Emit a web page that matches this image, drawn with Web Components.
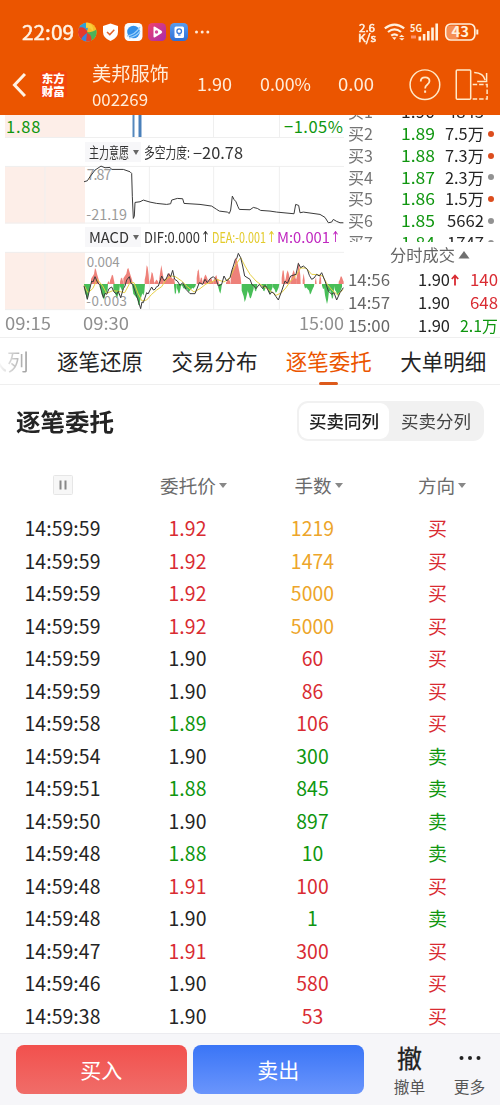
<!DOCTYPE html>
<html lang="zh-CN">
<head>
<meta charset="utf-8">
<meta name="viewport" content="width=device-width">
<title>美邦服饰 002269</title>
<style>
body {
    margin: 0;
    width: 500px;
    height: 1105px;
    overflow: hidden;
    background: #fff;
    color: #242424;
    font-family: "Noto Sans CJK SC", "Noto Sans", sans-serif;
    --red: #d92b32;
    --green: #0f960f;
    --amber: #eda52a;
    --orange: #eb5500;
}
</style>
</head>
<body>
<quote-app></quote-app>

<script>
class ZBase extends HTMLElement {
    constructor() {
        super()
        const shadowRoot = this.attachShadow({ mode: 'open' })
        const template = document.createElement('template')
        template.innerHTML = `${this.style_}${this.html}`
        shadowRoot.appendChild(template.content.cloneNode(true))
    }
    get html() { return '<slot></slot>' }
    get style_() { return '' }
}

// one line of text, squeezed or stretched to the width in w
class FitText extends ZBase {
    get html() { return `<span><slot></slot></span>` }
    get style_() { return `
<style>
:host { display: block; flex: none; white-space: nowrap; line-height: 1.2; }
span { display: inline-block; transform-origin: 0 50%; }
</style>
    `}
    connectedCallback() {
        const w = Number(this.getAttribute('w'))
        const span = this.shadowRoot.querySelector('span')
        this.style.width = w + 'px'
        const real = span.getBoundingClientRect().width
        if (real > 0) span.style.transform = `scaleX(${w / real})`
    }
}

class StatusBar extends ZBase {
    get html() { return `
<fit-text class="time" w="52">22:09</fit-text>
<svg class="apps" width="134" height="22" viewBox="76 21 134 22">
  <defs>
    <linearGradient id="pk" x1="0" y1="0" x2="1" y2="1"><stop offset="0" stop-color="#f0436a"/><stop offset="1" stop-color="#a62bb0"/></linearGradient>
    <linearGradient id="bl" x1="0" y1="0" x2="0" y2="1"><stop offset="0" stop-color="#5a9df0"/><stop offset="1" stop-color="#2c6fd6"/></linearGradient>
    <clipPath id="ball"><circle cx="87.300" cy="32" r="9.400"/></clipPath>
  </defs>
  <g clip-path="url(#ball)">
    <rect x="77" y="22" width="21" height="21" fill="#f8bd2a"/>
    <path d="M77 28Q82 22 86 22Q90 27 86 33Q81 28 77 29Z" fill="#2f9fd8"/>
    <path d="M77 28Q85 25 88 33L84 43H77Z" fill="#e43a2d"/>
    <path d="M86 22Q94 24 93 31Q90 27 86 28Z" fill="#f9cf3c"/>
    <path d="M98 26Q96 33 87 32Q91 39 89 43H98Z" fill="#4db25a"/>
    <path d="M80 42Q82 36 87 33Q92 38 90 43Z" fill="#3a86dd"/>
    <path d="M87 33Q93 35 91 43L86 42Z" fill="#e6402e"/>
  </g>
  <path d="M110.500 23.500L118 26V32Q118 38 110.500 41Q103 38 103 32V26Z" fill="#fff"/>
  <path d="M107 32L109.800 34.600L114.300 29.800" fill="none" stroke="#e2622c" stroke-width="1.500"/>
  <rect x="124.500" y="23" width="18" height="18" rx="4.500" fill="#f8fcff"/>
  <circle cx="133.500" cy="32" r="6.300" fill="#3190ea"/>
  <path d="M127 36Q135 35 140 27M129 38Q137 36 140 31" fill="none" stroke="#9bd1fb" stroke-width="1.400"/>
  <rect x="148" y="23" width="18" height="18" rx="4.500" fill="url(#pk)"/>
  <path d="M153.500 27.500Q153.500 26 155 26.800L161.500 30.800Q163 32 161.500 33.200L155 37.200Q153.500 38 153.500 36.500Z" fill="#fff"/>
  <circle cx="156.500" cy="32" r="1.700" fill="#d5469c"/>
  <rect x="170" y="23" width="18" height="18" rx="4.500" fill="url(#bl)"/>
  <rect x="174.500" y="26.500" width="9.500" height="11.500" rx="1.500" fill="#fff"/>
  <circle cx="179.200" cy="31.200" r="2.300" fill="none" stroke="#3479de" stroke-width="1.300"/>
  <path d="M178 35h2.500" stroke="#3479de" stroke-width="1.200"/>
  <g fill="#ffe9d6"><circle cx="196.500" cy="32" r="1.500"/><circle cx="202.200" cy="32" r="1.500"/><circle cx="207.800" cy="32" r="1.500"/></g>
</svg>
<div class="speed"><fit-text w="16">2.6</fit-text><fit-text w="18">K/s</fit-text></div>
<svg class="signal" width="100" height="22" viewBox="382 21 100 22">
  <g fill="none" stroke="#fff0dc" stroke-width="2.200">
    <path d="M384.800 28.400Q394.500 20.700 404.200 28.400"/>
    <path d="M388 32Q394.500 26.800 401 32"/>
    <path d="M391.200 35.600Q394.500 33 397.800 35.600"/>
  </g>
  <path d="M392 37.300L394.500 40L396.500 37.300Z" fill="#fff0dc"/>
  <path d="M399 37L401.500 34.700L404.500 37ZM399 38.300L402 40.500L404.500 38.300Z" fill="#fff0dc"/>
  <text x="410" y="31.500" font-size="10" font-weight="700" fill="#fff0dc" textLength="12" lengthAdjust="spacingAndGlyphs">5G</text>
  <g fill="#fff0dc"><rect x="418.500" y="36.500" width="2.600" height="4"/><rect x="422.800" y="34" width="2.600" height="6.500"/><rect x="427" y="31" width="2.600" height="9.500"/><rect x="431.200" y="27.500" width="2.600" height="13"/><rect x="435.400" y="23.500" width="2.600" height="17"/></g>
  <path d="M411 37h5" stroke="#ff9169" stroke-width="3"/>
  <rect x="447" y="25.500" width="12" height="13.500" rx="3" fill="#f58f55"/>
  <rect x="445.800" y="24" width="29" height="16" rx="5" fill="none" stroke="#fff0dc" stroke-width="1.700"/>
  <path d="M477.300 29.500v5" stroke="#fff0dc" stroke-width="2"/>
  <text x="451.500" y="37.300" font-size="14.500" font-weight="700" fill="#fff0dc" textLength="17.500" lengthAdjust="spacingAndGlyphs">43</text>
</svg>
    `}
    get style_() { return `
<style>
:host { display: flex; align-items: center; height: 64px; box-sizing: border-box; padding: 0 18px 0 22px; color: #fff3e4; }
svg { overflow: visible; }
.time { font-size: 19.5px; line-height: 22px; -webkit-text-stroke: .5px #fff3e4; }
.apps { margin-left: 2px; }
.speed { margin-left: auto; font-size: 11px; display: flex; flex-direction: column; align-items: center; -webkit-text-stroke: .5px #fff3e4; }
.speed fit-text { line-height: 10px; }
.signal { margin-left: 6px; }
</style>
    `}
}

class StockHeader extends ZBase {
    get html() { return `
<svg width="15" height="26" viewBox="0 0 15 26"><path d="M13 2L2.500 13L13 24" fill="none" stroke="#fff3e4" stroke-width="3"/></svg>
<div class="logo"><span>东方</span><span>财富</span></div>
<div class="name"><fit-text class="cn" w="77">美邦服饰</fit-text><fit-text class="code" w="56">002269</fit-text></div>
<fit-text class="num" w="35" style="margin-left:27px">1.90</fit-text>
<fit-text class="num" w="51" style="margin-left:27.500px">0.00%</fit-text>
<fit-text class="num" w="36" style="margin-left:27.500px">0.00</fit-text>
<svg style="margin-left:34px" width="82" height="34" viewBox="408 68 82 34" fill="none" stroke="#ffe9c8" stroke-width="1.500">
  <circle cx="425" cy="84.700" r="14.900"/>
  <path d="M420.800 81.500Q420.800 77.300 425.200 77.300Q429.600 77.300 429.600 81Q429.600 83.200 427.300 84.700Q425.200 86.200 425.200 88.500" stroke-width="1.800"/>
  <path d="M425.200 90.500v2.300" stroke-width="2"/>
  <rect x="456.500" y="70" width="14.500" height="29.200" rx="1"/>
  <path d="M473 84.500H487.500V99H472" stroke-dasharray="4.500 2"/>
  <path d="M474.500 72.500Q484 73 485.500 80M487 73V81.500H477.500"/>
</svg>
    `}
    get style_() { return `
<style>
:host { display: flex; align-items: center; height: 51px; padding: 0 10px 5px 12px; color: #ffedda; margin-top: -5px; }
.logo { display: flex; flex-direction: column; margin-left: 13px; width: 27px; height: 27px; justify-content: center; align-items: center; background: #f2450d; border-radius: 4px; font-weight: 900; font-size: 11.5px; line-height: 12.5px; color: #fff; }
.name { margin-left: 25px; width: 79px; padding-top: 2px; }
.cn { font-size: 19px; line-height: 27px; }
.code { font-size: 16px; line-height: 26px; }
.num { font-size: 17.5px; line-height: 26px; margin-top: -1px; }
</style>
    `}
}

class ChartPane extends ZBase {
    get html() {
        // bars: [from, to, peak], base line at 174
        const bars = [
            [273,298,125],[322,330,164],[330,344,143],[360,370,152],[370,398,124],[434,448,112],[449,463,134],[463,476,160],[478,490,117],[490,525,140],
            [590,600,122],[600,608,150],[608,625,144],[625,640,154],[640,657,146],[678,692,158],[692,724,92],[845,854,122],[854,872,133],[872,890,132],[889,902,104],[908,914,142],[945,950,150],[957,964,142],[1016,1031,148],
            [252,271,222],[299,324,222],[340,360,220],[360,374,196],[397,435,240],
            [522,530,212],[530,544,206],[544,588,198],[655,666,205],[725,744,230],[740,762,220],[762,772,200],[784,800,198],[800,818,204],[818,838,202],[912,920,190],[918,943,206],[966,975,192],[972,990,234],[990,1004,224],[1002,1026,210]
        ]
        let svg = ''
        for (const [a, b, y] of bars) {
            let d = `M${a} 174`
            const mid = (a + b) / 2
            for (let x = a; x <= b; x += 3) {
                const k = 1 - Math.abs(x - mid) / (b - a) * 1.3
                const jag = ((x * 7) % 5) / 5 * .25
                d += `L${x} ${174 + (y - 174) * Math.max(0, k - (Math.abs(x - mid) > 3 ? jag : 0))}`
            }
            svg += `<path d="${d}L${b} 174Z" fill="${y < 174 ? '#ed746c' : '#35b847'}"/>`
        }
        return `
<svg width="345" height="23" viewBox="0 0 345 23">
  <rect x="5" y="0" width="80" height="22" fill="#fdeee8"/>
  <path d="M5 22.500H344M213.500 0V22M279.500 0V22" class="grid"/>
  <path d="M133.500 0v22" stroke="#5588bd" stroke-width="2"/>
  <path d="M140 0v22" stroke="#4a80ba" stroke-width="3"/>
  <text x="6" y="17.500" font-size="16.500" fill="#0f960f" textLength="34.500">1.88</text>
  <text x="284" y="17.500" font-size="16.500" fill="#0f960f" textLength="59">−1.05%</text>
</svg>
<div class="bar"><fit-text class="pick" w="40">主力意愿</fit-text><i></i><fit-text w="46">多空力度:</fit-text><fit-text class="wide" w="50" style="margin-left:3px">−20.78</fit-text></div>
<svg width="345" height="57.500" viewBox="0 168 1035 172">
  <rect x="15" y="168" width="240" height="172" fill="#fdeee8"/>
  <path d="M15 169H1032M15 339H1032M448 168V340M641 168V340M838 168V340M135 168V340" class="grid"/>
  <text x="260" y="210" class="axis" textLength="74">7.87</text>
  <text x="259" y="329" class="axis" textLength="122">-21.19</text>
  <polyline class="ln" points="252,215 262,212 270,200 285,180 303,168 315,173 330,172 335,178 370,178 390,185 395,190 397,260 400,325 403,318 405,277 420,275 430,270 450,276 470,280 500,283 512,281 515,270 532,265 548,266 552,280 600,283 635,288 650,298 658,303 682,306 688,310 692,300 697,258 702,268 708,275 714,290 718,298 750,299 760,292 772,295 782,301 810,303 830,306 882,311 887,283 896,286 900,308 910,306 960,313 975,322 985,338 995,336 1000,328 1010,334 1020,338 1030,338"/>
</svg>
<div class="bar b2"><fit-text class="pick" w="40">MACD</fit-text><i></i><fit-text w="56">DIF:0.000</fit-text><fit-text class="up" w="9">↑</fit-text><fit-text w="54" style="color:#e3cb2c">DEA:-0.001</fit-text><fit-text class="up" w="9" style="color:#e3cb2c">↑</fit-text><fit-text w="53" style="color:#c028c0">M:0.001</fit-text><fit-text class="up" w="9" style="color:#c028c0">↑</fit-text></div>
<svg width="345" height="58" viewBox="0 78 1035 174">
  <rect x="15" y="78" width="240" height="174" fill="#fdeee8"/>
  <path d="M15 79H1032M15 251H1032M448 78V252M641 78V252M838 78V252M135 78V252" class="grid"/>
  <g opacity=".9">${svg}</g>
  <text x="260" y="123" class="axis sm" textLength="99">0.004</text>
  <text x="259" y="241" class="axis sm" textLength="122">-0.003</text>
  <polyline class="ln dea" points="252,178 264,200 278,188 292,160 308,180 320,202 338,194 356,196 374,200 390,170 402,170 414,202 426,225 440,222 455,205 470,192 485,182 500,158 515,150 526,152 545,165 562,182 582,198 600,188 618,174 635,168 650,160 672,168 690,155 708,115 722,95 735,120 750,145 768,165 785,178 805,190 828,208 845,200 858,185 872,165 888,148 902,126 918,126 935,145 952,146 968,150 982,175 996,192 1012,206 1030,190"/>
  <polyline class="ln" points="252,180 257,198 262,220 267,198 275,165 279,168 285,152 292,168 300,178 305,198 310,215 315,202 320,205 327,188 335,183 342,198 350,205 355,196 362,215 370,188 375,180 380,162 388,152 393,172 398,175 408,205 415,225 422,248 426,228 430,230 440,200 444,204 455,183 460,192 465,190 470,182 475,180 485,150 492,164 498,160 505,143 512,152 518,133 524,160 532,165 540,178 548,170 558,190 570,203 585,203 598,170 608,175 615,160 622,170 630,158 640,152 648,160 655,180 665,175 672,150 680,165 690,155 696,132 700,120 706,100 710,98 715,82 722,95 728,120 734,150 750,160 756,176 760,178 768,188 778,175 788,188 792,180 798,180 810,205 815,198 820,200 828,212 835,222 845,195 850,180 855,165 862,172 872,150 888,145 895,112 902,125 910,120 922,130 928,148 935,160 942,156 950,145 958,150 965,140 975,165 985,195 995,205 1002,200 1010,222 1020,200 1030,185"/>
</svg>
<div class="times"><fit-text w="46">09:15</fit-text><fit-text w="46" style="margin-left:32px">09:30</fit-text><fit-text w="45" style="margin-left:auto">15:00</fit-text></div>
    `}
    get style_() { return `
<style>
:host { display: flex; flex-direction: column; width: 345px; height: 222px; }
svg { display: block; flex: none; overflow: visible; }
.grid { fill: none; stroke: #efefef; stroke-width: 1; vector-effect: non-scaling-stroke; }
.ln { fill: none; stroke: #3b3b3b; stroke-width: 1; vector-effect: non-scaling-stroke; stroke-linejoin: round; }
.dea { stroke: #e6cf45; }
.axis { font-size: 43px; fill: #9b9b9b; }
.sm { font-size: 40px; }
.bar { display: flex; align-items: center; height: 28px; padding-left: 89px; font-size: 14.5px; color: #333; flex: none; }
.bar fit-text { line-height: 20px; margin-top: -1px; }
.b2 { font-size: 15px; }
.bar .wide { font-size: 15.5px; }
.pick { box-shadow: -4px 0 0 #f7f7f9, 12px 0 0 #f7f7f9; background: #f7f7f9; }
.bar .up { font-family: "DejaVu Sans", sans-serif; font-size: 15px; margin-left: 1px; margin-right: 1.5px; }
i { width: 0; border: 3.5px solid transparent; border-top: 5px solid #666; border-bottom: 0; margin: 0 5px 0 4px; }
.times { display: flex; align-items: center; height: 27px; padding: 0 1px 0 5px; font-size: 17px; color: #8f8f8f; flex: none; }
</style>
    `}
}

class OrderBook extends ZBase {
    get html() {
        const bids = [
            ['1', '1.90', '4843', ''],
            ['2', '1.89', '7.5万', '#dc4d1e'],
            ['3', '1.88', '7.3万', '#dc4d1e'],
            ['4', '1.87', '2.3万', '#929292'],
            ['5', '1.86', '1.5万', '#dc4d1e'],
            ['6', '1.85', '5662', '#929292'],
            ['7', '1.84', '1747', '#929292']
        ]
        const deals = [
            ['14:56', '1.90', '↑', '140', 'red'],
            ['14:57', '1.90', '', '648', 'red'],
            ['15:00', '1.90', '', '2.1万', 'green']
        ]
        return `
<div class="bids"><div class="list">
${bids.map((r, n) => `<div class="row"><fit-text class="lv" w="25">买${r[0]}</fit-text><fit-text class="pr" w="34" style="color:${n ? 'var(--green)' : '#242424'}">${r[1]}</fit-text><fit-text class="vol" w="${r[2].includes('万') ? 39 : 37}">${r[2]}</fit-text><b style="background:${r[3] || 'none'}"></b></div>`).join('')}
</div></div>
<div class="head"><fit-text w="65">分时成交</fit-text><svg width="12" height="8" viewBox="0 0 12 8"><path d="M6 0L11.500 7.500H.5Z" fill="#707070"/></svg></div>
${deals.map(r => `<div class="deal"><fit-text class="tm" w="42">${r[0]}</fit-text><fit-text class="dp" w="32">${r[1]}</fit-text><svg width="8" height="12" viewBox="0 0 8 12">${r[2] ? '<path d="M4 11.500V2M.8 5L4 1.500L7.200 5" fill="none" stroke="#d92b32" stroke-width="1.800"/>' : ''}</svg><fit-text class="dv" w="${r[3].includes('万') ? 38 : 28}" style="color:var(--${r[4]})">${r[3]}</fit-text></div>`).join('')}
    `}
    get style_() { return `
<style>
:host { display: flex; flex-direction: column; width: 155px; height: 222px; }
.bids { height: 127px; overflow: hidden; font-size: 16.3px; }
.list { margin-top: -13.8px; }
.row { display: flex; align-items: center; height: 21.8px; padding-left: 3px; }
.row fit-text { line-height: 21.8px; }
.lv { color: #757575; }
.pr { margin-left: 28px; }
.vol { margin-left: auto; }
b { width: 6px; height: 6px; border-radius: 50%; margin: 0 6px 0 4px; }
.head { display: flex; align-items: center; height: 26px; padding-left: 45px; font-size: 16px; color: #666; }
.head svg { margin-left: 3px; }
.deal { display: flex; align-items: center; height: 23px; padding: 0 2px 0 3px; font-size: 16px; }
.tm { color: #666; }
.dp { margin-left: 28px; }
.deal svg { margin-left: 1px; }
.dv { margin-left: auto; }
</style>
    `}
}

class TabStrip extends ZBase {
    get html() { return `
<div class="cut"><span>入列</span></div>
<span>逐笔还原</span><span>交易分布</span><span class="on">逐笔委托</span><span>大单明细</span>
    `}
    get style_() { return `
<style>
:host { display: flex; align-items: center; height: 48px; box-sizing: border-box; border-top: 1px solid #efefef; border-bottom: 1px solid #efefef; font-size: 21.5px; gap: 28.4px; white-space: nowrap; }
span { line-height: 46px; height: 47px; display: block; }
.cut { width: 28.6px; display: flex; justify-content: flex-end; overflow: hidden; height: 47px; }
.cut span { background: linear-gradient(90deg, #fff 25%, #999 100%); background-clip: text; -webkit-background-clip: text; color: transparent; }
.on { color: var(--orange); position: relative; }
.on::after { content: ""; position: absolute; left: 33px; bottom: 0; width: 19px; height: 3px; border-radius: 1.5px; background: #dd5a1b; }
</style>
    `}
}

class PanelTitle extends ZBase {
    get html() { return `
<fit-text class="h" w="98">逐笔委托</fit-text>
<div class="seg"><div class="on"><fit-text w="70">买卖同列</fit-text></div><div><fit-text w="70">买卖分列</fit-text></div></div>
    `}
    get style_() { return `
<style>
:host { display: flex; align-items: center; justify-content: space-between; height: 72px; padding: 0 16px; }
.h { font-size: 24px; font-weight: 700; }
.seg { display: flex; box-sizing: border-box; width: 187px; height: 40px; padding: 2px; background: #f1f1f1; border-radius: 11px; font-size: 17px; color: #444; }
.seg div { flex: 1; display: flex; align-items: center; justify-content: center; border-radius: 9px; }
.seg .on { background: #fff; color: #222; font-weight: 500; flex: none; width: 90px; }
</style>
    `}
}

class OrderTable extends ZBase {
    get html() {
        const rows = [
            ['14:59:59', '1.92', '1219', '买'],
            ['14:59:59', '1.92', '1474', '买'],
            ['14:59:59', '1.92', '5000', '买'],
            ['14:59:59', '1.92', '5000', '买'],
            ['14:59:59', '1.90', '60', '买'],
            ['14:59:59', '1.90', '86', '买'],
            ['14:59:58', '1.89', '106', '买'],
            ['14:59:54', '1.90', '300', '卖'],
            ['14:59:51', '1.88', '845', '卖'],
            ['14:59:50', '1.90', '897', '卖'],
            ['14:59:48', '1.88', '10', '卖'],
            ['14:59:48', '1.91', '100', '买'],
            ['14:59:48', '1.90', '1', '卖'],
            ['14:59:47', '1.91', '300', '买'],
            ['14:59:46', '1.90', '580', '买'],
            ['14:59:38', '1.90', '53', '买']
        ]
        let out = ''
        for (const r of rows) {
            const price = r[1] > '1.90' ? 'red' : r[1] < '1.90' ? 'green' : ''
            const side = r[3] == '买' ? 'red' : 'green'
            out += `<div class="row"><span>${r[0]}</span><span class="${price}">${r[1]}</span><span class="${r[2] > 1000 ? 'amber' : side}">${r[2]}</span><span class="dir ${side}">${r[3]}</span></div>`
        }
        return `
<div class="row head"><span><svg width="20" height="20" viewBox="0 0 20 20"><rect x=".5" y=".5" width="19" height="19" rx="1" fill="#f7f7f7" stroke="#e6e6e6"/><path d="M7.500 5.500v9M12.500 5.500v9" stroke="#888" stroke-width="2"/></svg></span><span>委托价<i></i></span><span>手数<i></i></span><span>方向<i></i></span></div>
${out}
    `}
    get style_() { return `
<style>
:host { display: block; height: 576px; overflow: hidden; }
.row { display: grid; grid-template-columns: repeat(4, 125px); height: 32.5px; align-items: center; font-size: 19.4px; letter-spacing: .1px; }
.row span { text-align: center; line-height: 32px; height: 32px; }
.row.head { height: 54px; font-size: 18.6px; color: #6b6b6b; padding-top: 1px; letter-spacing: 0; }
.head span { display: flex; align-items: center; justify-content: center; height: 36px; padding-left: 12px; }
.head span:first-child { padding: 0; }
.head span:last-child { padding-left: 9px; }
i { width: 0; border: 4.5px solid transparent; border-top: 5px solid #888; border-bottom: 0; margin-left: 3px; }
.row .dir { font-size: 19px; }
.red { color: var(--red); }
.green { color: var(--green); }
.amber { color: var(--amber); }
</style>
    `}
}

class TradeBar extends ZBase {
    get html() { return `
<div class="btn buy">买入</div>
<div class="btn sell">卖出</div>
<div class="item first"><span class="big">撤</span><span class="small">撤单</span></div>
<div class="item"><svg width="24" height="34" viewBox="0 0 24 34"><g fill="#222"><circle cx="3.500" cy="18" r="2"/><circle cx="12" cy="18" r="2"/><circle cx="20.500" cy="18" r="2"/></g></svg><span class="small">更多</span></div>
    `}
    get style_() { return `
<style>
:host { display: flex; height: 72px; box-sizing: border-box; padding: 11px 13px 0 16px; background: #f6f6f9; border-top: 1px solid #ececf0; }
.btn { width: 170.5px; height: 49px; border-radius: 8px; color: #fff; font-size: 21px; line-height: 48px; text-align: center; margin-right: 6.5px; }
.buy { background: linear-gradient(#f2504d, #f06d69); }
.sell { background: linear-gradient(#3a75f6, #6a95fc); }
.item { display: flex; flex-direction: column; align-items: center; width: 34px; margin-top: -5px; }
.item.first { margin: -5px 26px 0 22.5px; }
.big { font-size: 25px; line-height: 34px; height: 34px; color: #222; -webkit-text-stroke: .3px #222; }
.small { font-size: 15.7px; line-height: 25px; color: #555; }
.item svg { display: block; }
</style>
    `}
}

class QuoteApp extends ZBase {
    get html() { return `
<header><status-bar></status-bar><stock-header></stock-header></header>
<div class="quote"><chart-pane></chart-pane><order-book></order-book></div>
<tab-strip></tab-strip>
<panel-title></panel-title>
<order-table></order-table>
<trade-bar></trade-bar>
    `}
    get style_() { return `
<style>
:host { display: flex; flex-direction: column; width: 500px; height: 1105px; overflow: hidden; }
header { height: 115px; background: var(--orange); flex: none; }
.quote { display: flex; height: 222px; flex: none; }
tab-strip, panel-title, order-table, trade-bar { flex: none; }
</style>
    `}
}

customElements.define('status-bar', StatusBar)
customElements.define('stock-header', StockHeader)
customElements.define('chart-pane', ChartPane)
customElements.define('order-book', OrderBook)
customElements.define('tab-strip', TabStrip)
customElements.define('panel-title', PanelTitle)
customElements.define('order-table', OrderTable)
customElements.define('trade-bar', TradeBar)
customElements.define('quote-app', QuoteApp)
customElements.define('fit-text', FitText)
</script>
</body>
</html>
